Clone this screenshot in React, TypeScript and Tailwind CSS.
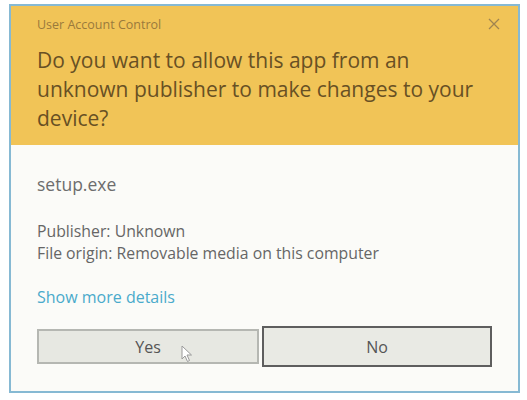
import React from "react";

export default function App() {
  return (
    <div className="w-[527px] h-[400px] bg-white pt-[4px] pl-[9px]" style={{ fontFamily: '"Open Sans", "Noto Sans", sans-serif' }}>
      <div className="w-[511px] h-[389px] border-2 border-[#86b9d3] bg-[#fbfbf8] flex flex-col">
        <div className="bg-[#f1c457] h-[139px] pl-[26px] pr-[20px] pt-[11px] relative">
          <div className="text-[12.5px] leading-[16px] text-[#9a7a3c]">User Account Control</div>
          <div className="absolute right-[18px] top-[12px] text-[#a08450]">
            <svg width="12" height="12" viewBox="0 0 12 12" fill="none" stroke="currentColor" strokeWidth="1.3">
              <path d="M1 1L11 11M11 1L1 11" />
            </svg>
          </div>
          <div className="mt-[13px] text-[21px] leading-[29px] text-[#685024]">
            Do you want to allow this app from an unknown publisher to make changes to your device?
          </div>
        </div>
        <div className="flex-1 pl-[26px] pr-[24px] pt-[28px]">
          <div className="text-[17.5px] leading-[22px] text-[#6d6d6d]">setup.exe</div>
          <div className="mt-[25px] text-[15.8px] leading-[22px] text-[#666666]">
            <div>Publisher: Unknown</div>
            <div>File origin: Removable media on this computer</div>
          </div>
          <div className="mt-[22px] text-[16px] leading-[22px] text-[#4aaacb]">Show more details</div>
          <div className="mt-[18px] flex items-center">
            <div className="w-[222px] h-[35px] border-2 border-[#b5b7b2] bg-[#e7e8e2] flex items-center justify-center text-[16px] text-[#555555] relative">
              Yes
              <svg className="absolute left-[142px] top-[14px]" width="12" height="18" viewBox="0 0 12 18">
                <path d="M1 1 L1 14 L4 11 L6.5 16.5 L8.5 15.5 L6 10 L10.5 10 Z" fill="#ffffff" stroke="#9a9a9a" strokeWidth="1" strokeLinejoin="round" />
              </svg>
            </div>
            <div className="ml-[3px] w-[230px] h-[41px] border-2 border-[#5e5e5e] bg-[#e9eae4] flex items-center justify-center text-[16px] text-[#555555]">
              No
            </div>
          </div>
        </div>
      </div>
    </div>
  );
}
